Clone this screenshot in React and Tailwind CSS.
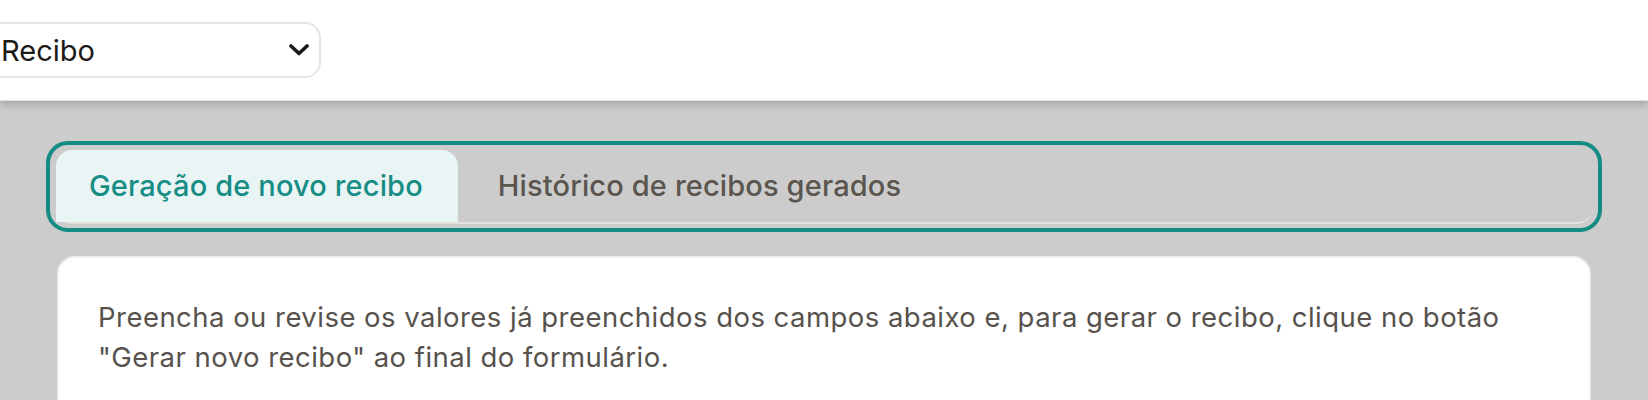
import React from "react";

export default function App() {
  return (
    <div className="min-h-screen bg-[#cccccc] font-['Inter','Noto_Sans',sans-serif] overflow-hidden">
      <header className="relative z-10 h-[101px] bg-white border-b border-[#e6e1dc] shadow-[0_3px_8px_rgba(0,0,0,0.22)] flex items-center">
        <div className="-ml-[18px] w-[339px] h-[56px] rounded-[16px] border-2 border-[#e8e4df] bg-white flex items-center justify-between pl-[17px] pr-[10px]">
          <span className="text-[29px] text-[#1c1917] leading-none">Recibo</span>
          <svg width="20" height="12" viewBox="0 0 20 12">
            <path d="M2 2 L10 9.5 L18 2" fill="none" stroke="#1c1917" strokeWidth="3.6" strokeLinecap="round" strokeLinejoin="round" />
          </svg>
        </div>
      </header>
      <main className="px-[46px] pt-[40px]">
        <div className="border-4 border-[#148c84] rounded-[22px] pt-[5px] pl-[6px] pr-[5px] pb-[4px]">
          <div className="flex border-b-2 border-[#e6e2de] rounded-b-[16px]">
            <div className="h-[72px] pl-[33px] pr-[35px] flex items-center rounded-t-[16px] bg-[#e9f5f5] text-[#178d85] text-[29px] font-medium tracking-[0.005em]">
              Geração de novo recibo
            </div>
            <div className="h-[72px] px-[40px] flex items-center text-[#5a554f] text-[29px] font-medium tracking-[0.005em]">
              Histórico de recibos gerados
            </div>
          </div>
        </div>
        <div className="mx-[11px] mt-[24px] bg-white rounded-[18px] border-2 border-[#efefef] px-[39px] pt-[39px] pb-[40px] text-[27.5px] leading-[40px] text-[#57524d] tracking-[0.017em]">
          Preencha ou revise os valores já preenchidos dos campos abaixo e, para gerar o recibo, clique no botão "Gerar novo recibo" ao final do formulário.
        </div>
      </main>
    </div>
  );
}
